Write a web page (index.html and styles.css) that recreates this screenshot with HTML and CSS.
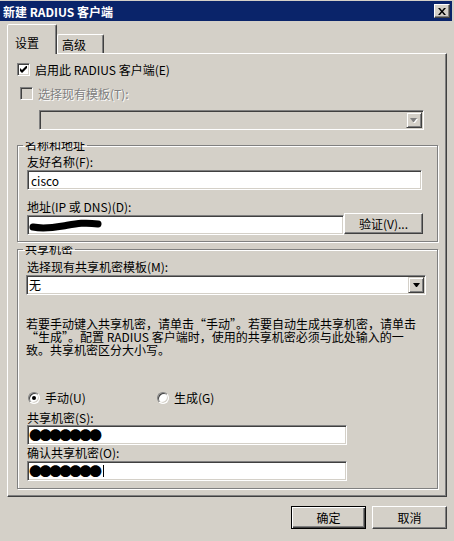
FILE: index.html
```html
<!DOCTYPE html>
<html lang="zh-CN">
<head>
  <meta charset="UTF-8" />
  <title>新建 RADIUS 客户端</title>
  <link rel="stylesheet" href="styles.css">
</head>
<body>
  <div class="window">
    <div class="titlebar">
      <span class="title">新建 RADIUS 客户端</span>
      <span class="close-btn">
        <svg width="8" height="7" viewBox="0 0 8 7"><path d="M0 0h2l2 2.5L6 0h2L5 3.5 8 7H6L4 4.5 2 7H0l3-3.5z" fill="#000"/></svg>
      </span>
    </div>

    <div class="tabs">
      <div class="tab active">设置</div>
      <div class="tab">高级</div>
    </div>

    <div class="panel">
      <label class="check-row">
        <span class="checkbox">
          <svg width="7" height="7" viewBox="0 0 7 7"><polygon points="0,2 2,4 6,0 7,0 7,2 2,7 0,5" fill="#000"/></svg>
        </span>
        <span>启用此 RADIUS 客户端(E)</span>
      </label>

      <label class="check-row disabled">
        <span class="checkbox"></span>
        <span>选择现有模板(T):</span>
      </label>

      <div class="combo disabled template-combo">
        <span class="combo-value"></span>
        <span class="drop-btn">
          <svg width="8" height="5" viewBox="0 0 8 5">
            <polygon points="1,1 8,1 5,5 4,5" fill="#fff"/>
            <polygon points="0,0 7,0 4,4 3,4" fill="#808080"/>
          </svg>
        </span>
      </div>

      <fieldset class="group">
        <legend><span>名称和地址</span></legend>
        <div class="field-label">友好名称(F):</div>
        <div class="textbox name-box">cisco</div>
        <div class="field-label address-label">地址(IP 或 DNS)(D):</div>
        <div class="address-row">
          <div class="textbox address-box">
            <svg width="74" height="14" viewBox="0 0 74 14"><path d="M4 9C14 11 22 10 34 8S54 4 69 6" stroke="#000" stroke-width="7" stroke-linecap="round" fill="none"/></svg>
          </div>
          <button class="btn verify-btn">验证(V)...</button>
        </div>
      </fieldset>

      <fieldset class="group secret-group">
        <legend><span>共享机密</span></legend>
        <div class="field-label">选择现有共享机密模板(M):</div>
        <div class="combo secret-combo">
          <span class="combo-value">无</span>
          <span class="drop-btn">
            <svg width="7" height="4" viewBox="0 0 7 4"><polygon points="0,0 7,0 4,4 3,4" fill="#000"/></svg>
          </span>
        </div>
        <p class="hint">若要手动键入共享机密，请单击“手动”。若要自动生成共享机密，请单击<br>“生成”。配置 RADIUS 客户端时，使用的共享机密必须与此处输入的一<br>致。共享机密区分大小写。</p>
        <div class="radio-row">
          <label class="option"><span class="radio on"><span class="dot"></span></span>手动(U)</label>
          <label class="option"><span class="radio"></span>生成(G)</label>
        </div>
        <div class="field-label secret-label">共享机密(S):</div>
        <div class="textbox secret-box"><span class="dots">●●●●●●●</span></div>
        <div class="field-label confirm-label">确认共享机密(O):</div>
        <div class="textbox secret-box"><span class="dots">●●●●●●●</span><span class="caret"></span></div>
      </fieldset>
    </div>

    <div class="actions">
      <button class="btn default">确定</button>
      <button class="btn">取消</button>
    </div>
  </div>
</body>
</html>
```

FILE: styles.css
```css
:root {
  --face: #d4d0c8;
  --shadow: #808080;
  --dark: #404040;
  --title: #0a246a;
}

body {
  margin: 0;
  background: var(--face);
  font-family: "Noto Sans CJK SC", sans-serif;
  font-size: 12px;
  color: #000;
}

.window {
  width: 454px;
  height: 541px;
  overflow: hidden;
}

.titlebar {
  height: 20px;
  margin: 1px 2px 0 0;
  padding: 0 2px 0 3px;
  background: var(--title);
  color: #fff;
  font-weight: bold;
  display: flex;
  justify-content: space-between;
  align-items: center;
}

.close-btn {
  width: 16px;
  height: 14px;
  box-sizing: border-box;
  background: var(--face);
  border: 1px solid;
  border-color: #fff var(--dark) var(--dark) #fff;
  box-shadow: inset -1px -1px var(--shadow);
  display: flex;
  align-items: center;
  justify-content: center;
}

/* tabs */
.tabs {
  height: 32px;
  padding-left: 7px;
  display: flex;
  align-items: flex-end;
}

.tab {
  box-sizing: border-box;
  height: 19px;
  width: 47px;
  padding: 4px 0 0 4px;
  line-height: 12px;
  border: 1px solid;
  border-bottom: 0;
  border-color: #fff var(--dark) transparent #fff;
  border-radius: 2px 2px 0 0;
  box-shadow: inset -1px 0 var(--shadow);
}

.tab.active {
  position: relative;
  z-index: 1;
  height: 30px;
  width: 50px;
  margin-bottom: -1px;
  padding: 12px 0 0 7px;
  background: var(--face);
}

.panel {
  margin-left: 7px;
  width: 440px;
  box-sizing: border-box;
  border: 1px solid;
  border-color: #fff var(--dark) var(--dark) #fff;
  box-shadow: inset -1px -1px var(--shadow);
  padding-left: 9px;
}

/* checkboxes */
.check-row {
  display: flex;
  align-items: center;
  gap: 5px;
  height: 13px;
  line-height: 12px;
  margin-top: 9px;
}

.check-row.disabled {
  margin-top: 11px;
  padding-left: 3px;
  color: var(--shadow);
  text-shadow: 1px 1px #fff;
}

.checkbox {
  width: 13px;
  height: 13px;
  box-sizing: border-box;
  border: 1px solid;
  border-color: var(--shadow) #fff #fff var(--shadow);
  box-shadow: inset 1px 1px var(--dark), inset -1px -1px var(--face);
  background: #fff;
  display: flex;
  align-items: center;
  justify-content: center;
}

.disabled .checkbox {
  background: var(--face);
}

/* sunken fields */
.combo,
.textbox {
  box-sizing: border-box;
  height: 20px;
  border: 1px solid;
  border-color: var(--shadow) #fff #fff var(--shadow);
  box-shadow: inset 1px 1px var(--dark), inset -1px -1px var(--face);
  background: #fff;
  padding: 1px;
  display: flex;
  align-items: center;
}

.combo.disabled {
  background: var(--face);
}

.combo-value {
  flex: 1;
  padding-left: 1px;
  line-height: 12px;
}

.drop-btn {
  width: 16px;
  height: 16px;
  box-sizing: border-box;
  background: var(--face);
  border: 1px solid;
  border-color: var(--face) var(--dark) var(--dark) var(--face);
  box-shadow: inset 1px 1px #fff, inset -1px -1px var(--shadow);
  display: flex;
  align-items: center;
  justify-content: center;
}

.template-combo {
  margin: 10px 0 0 22px;
  width: 385px;
}

/* group boxes */
.group {
  margin: 9px 0 0;
  padding: 5px 0 6px 9px;
  width: 421px;
  min-width: 0;
  box-sizing: border-box;
  border: 1px solid var(--shadow);
  box-shadow: 1px 1px #fff, inset 1px 1px #fff;
}

.group legend {
  margin-left: -4px;
  padding: 0 2px;
  line-height: 12px;
}

.group legend span {
  display: block;
  clip-path: inset(3px 0 0 0);
}

.field-label {
  height: 12px;
  line-height: 12px;
}

.name-box {
  margin-top: 2px;
  width: 395px;
  padding-left: 3px;
}

.address-label {
  margin-top: 11px;
}

.address-row {
  display: flex;
  align-items: flex-start;
}

.address-box {
  margin-top: 2px;
  width: 317px;
}

.btn {
  font: inherit;
  color: #000;
  width: 75px;
  height: 23px;
  padding: 0;
  background: var(--face);
  border: 1px solid;
  border-color: #fff var(--dark) var(--dark) #fff;
  box-shadow: inset -1px -1px var(--shadow);
}

.btn.default {
  border-color: #000;
  box-shadow: inset 1px 1px #fff, inset -1px -1px var(--dark), inset -2px -2px var(--shadow);
}

.verify-btn {
  width: 79px;
  height: 21px;
}

.secret-group {
  margin: 1px 0 7px;
  padding: 6px 0 7px 9px;
}

.secret-combo {
  margin: 2px 0 0 -1px;
  width: 400px;
}

.hint {
  margin: 21.5px 0 0 -1px;
  line-height: 13px;
  white-space: nowrap;
}

.radio-row {
  display: flex;
  margin-top: 36.5px;
  padding-left: 1px;
  height: 12px;
  line-height: 12px;
}

.option {
  width: 129px;
  display: flex;
  align-items: center;
  gap: 5px;
}

.radio {
  width: 12px;
  height: 12px;
  box-sizing: border-box;
  border-radius: 50%;
  border: 1px solid;
  border-color: var(--shadow) #fff #fff var(--shadow);
  box-shadow: inset 1px 1px var(--dark), inset -1px -1px var(--face);
  background: #fff;
  display: flex;
  align-items: center;
  justify-content: center;
}

.radio .dot {
  width: 4px;
  height: 4px;
  border-radius: 50%;
  background: #000;
}

.secret-label {
  margin-top: 8px;
}

.confirm-label {
  margin-top: 2px;
}

.secret-box {
  width: 320px;
  margin-top: 1px;
}

.confirm-label + .secret-box {
  margin-top: 2px;
}

.dots {
  font-size: 13px;
  letter-spacing: -3px;
  line-height: 12px;
}

.caret {
  width: 1px;
  height: 12px;
  margin-left: 4px;
  background: #000;
}

.actions {
  margin-top: 9px;
  padding-right: 7px;
  display: flex;
  justify-content: flex-end;
  gap: 6px;
}
```
